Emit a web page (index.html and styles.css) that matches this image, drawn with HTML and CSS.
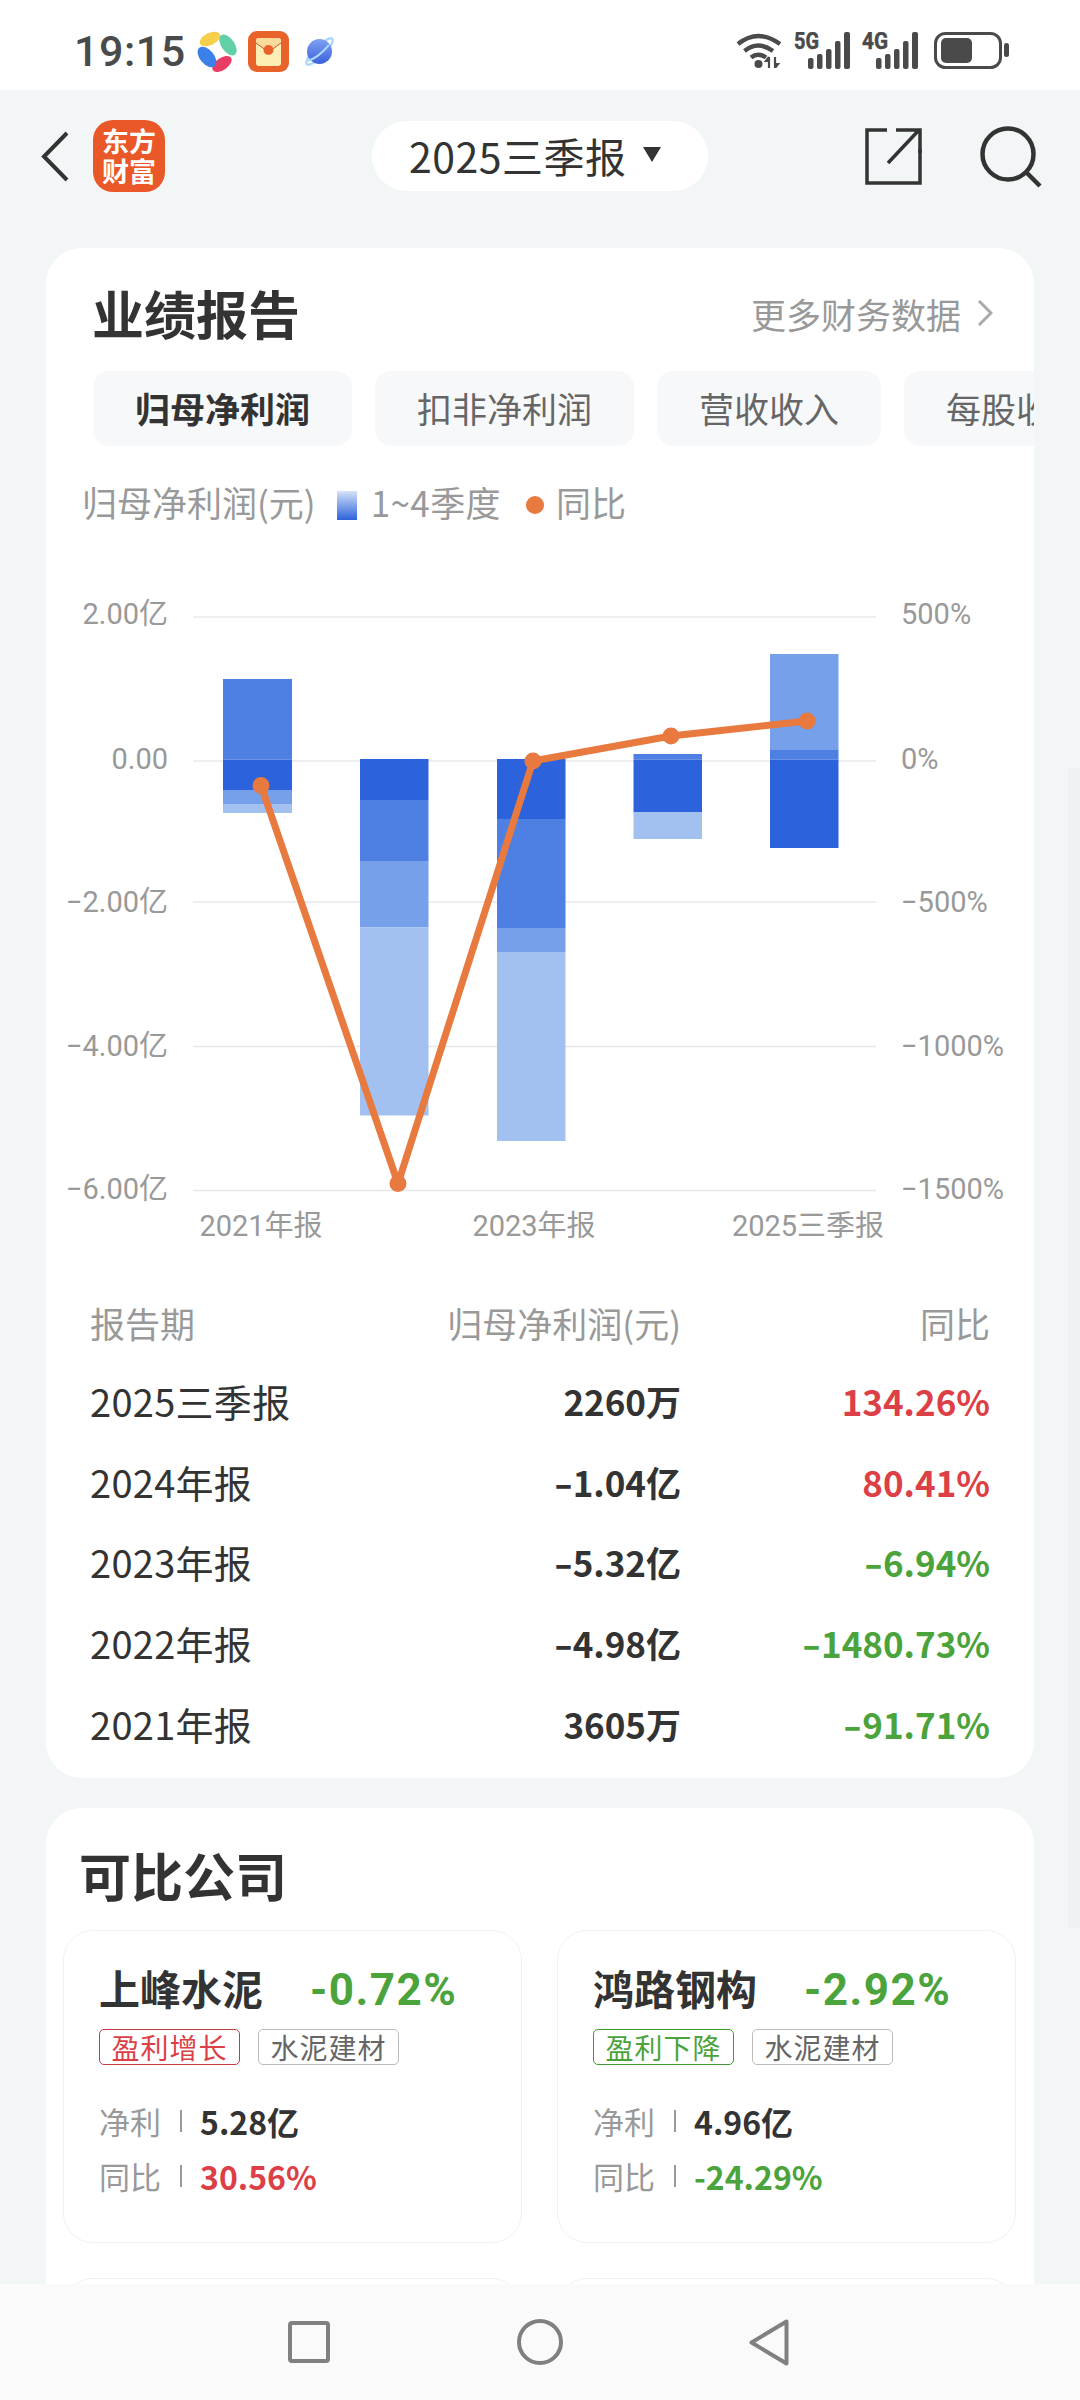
FILE: index.html
```html
<!DOCTYPE html>
<html lang="zh">
<head>
<meta charset="utf-8">
<title>业绩报告</title>
<link rel="stylesheet" href="styles.css">
</head>
<body>
<div class="page">
  <div class="status">
    <span class="time">19:15</span>
    <svg class="ic-app" viewBox="0 0 41 41"><ellipse cx="13" cy="8" rx="11" ry="6" transform="rotate(-25 13 8)" fill="#f7cf4a"/><ellipse cx="31" cy="14" rx="12" ry="6.5" transform="rotate(55 31 14)" fill="#62d0a6"/><ellipse cx="25" cy="33" rx="11" ry="6" transform="rotate(-35 25 33)" fill="#ea3d64"/><ellipse cx="10" cy="26" rx="12" ry="7" transform="rotate(50 10 26)" fill="#3c7fe8"/></svg>
    <svg class="ic-env" viewBox="0 0 41 41"><rect width="41" height="41" rx="9" fill="#e8622a"/><rect x="8" y="7" width="25" height="28" rx="3" fill="#fdeeb5"/><path d="M8 12 L20.5 21 L33 12 L33 10 Q33 7 30 7 L11 7 Q8 7 8 10Z" fill="#f9dc9c"/><path d="M8 12 L20.5 21 L33 12" fill="none" stroke="#c8552a" stroke-width="1"/><circle cx="20.5" cy="19" r="5" fill="#e8622a"/></svg>
    <svg class="ic-planet" viewBox="0 0 29 29"><defs><linearGradient id="pl" x1="0" y1="0" x2="0" y2="1"><stop offset="0" stop-color="#7fa0f3"/><stop offset="1" stop-color="#3a62dc"/></linearGradient></defs><ellipse cx="14.5" cy="14.5" rx="18" ry="5" transform="rotate(-45 14.5 14.5)" fill="none" stroke="#a9d8fb" stroke-width="2.4"/><circle cx="14.5" cy="14.5" r="12.5" fill="url(#pl)"/><path d="M2 24 Q12 22 24 8" fill="none" stroke="#a9d8fb" stroke-width="2"/></svg>
    <span class="status-fill"></span>
    <svg class="ic-wifi" viewBox="0 0 46 35"><g fill="none" stroke="#4a4a4a" stroke-width="4.4"><path d="M2 11 Q22 -5 44 11"/><path d="M8.5 18 Q22 7 37 18"/><path d="M15 24.5 Q22 19 30 24.5"/></g><circle cx="22.5" cy="31" r="4" fill="#4a4a4a"/><path d="M33 35V24M33 24l-3 4h3M39 24v11M39 35l3-4h-3" fill="none" stroke="#4a4a4a" stroke-width="2.2"/></svg>
    <svg class="ic-sig" viewBox="0 0 56 37"><text x="0" y="17" class="net" textLength="25" lengthAdjust="spacingAndGlyphs">5G</text><g fill="#4a4a4a"><rect x="14" y="26" width="5.5" height="11" rx="2"/><rect x="23" y="22" width="5.5" height="15" rx="2"/><rect x="32" y="17" width="5.5" height="20" rx="2"/><rect x="41" y="9" width="5.5" height="28" rx="2"/><rect x="50" y="0" width="6" height="37" rx="2"/></g></svg>
    <svg class="ic-sig" viewBox="0 0 56 37"><text x="0" y="17" class="net" textLength="26" lengthAdjust="spacingAndGlyphs">4G</text><g fill="#4a4a4a"><rect x="14" y="26" width="5.5" height="11" rx="2"/><rect x="23" y="22" width="5.5" height="15" rx="2"/><rect x="32" y="17" width="5.5" height="20" rx="2"/><rect x="41" y="9" width="5.5" height="28" rx="2"/><rect x="50" y="0" width="6" height="37" rx="2"/></g></svg>
    <svg class="ic-batt" viewBox="0 0 75 37"><rect x="1.5" y="1.5" width="65" height="34" rx="10" fill="none" stroke="#4a4a4a" stroke-width="3"/><rect x="7" y="6" width="31" height="25" rx="5" fill="#4a4a4a"/><rect x="70" y="11" width="5" height="14" rx="2.5" fill="#4a4a4a"/></svg>
  </div>

  <div class="topbar">
    <svg class="ic-back" viewBox="0 0 28 51"><path d="M26 2 L3 25.5 L26 49" fill="none" stroke="#333" stroke-width="4"/></svg>
    <div class="logo"><span>东方</span><span>财富</span></div>
    <div class="pill"><span>2025三季报</span><i class="caret"></i></div>
    <svg class="ic-share" viewBox="0 0 57 58"><path d="M22 3 H2 V56 H55 V22" fill="none" stroke="#333" stroke-width="3.5"/><path d="M23 36 L54 3 M31 3 H55 V26" fill="none" stroke="#333" stroke-width="3.5"/></svg>
    <svg class="ic-search" viewBox="0 0 62 62"><circle cx="28" cy="28" r="25.5" fill="none" stroke="#333" stroke-width="4.5"/><path d="M46 46 L60 60" stroke="#333" stroke-width="4.5"/></svg>
  </div>

  <section class="card perf">
    <div class="card-head">
      <h2 class="title">业绩报告</h2>
      <div class="more"><span>更多财务数据</span><svg class="ic-more" viewBox="0 0 16 26"><path d="M2 1 L14 13 L2 25" fill="none" stroke="#aaa" stroke-width="3"/></svg></div>
    </div>
    <div class="tabs">
      <div class="tab active">归母净利润</div>
      <div class="tab">扣非净利润</div>
      <div class="tab">营收收入</div>
      <div class="tab">每股收益</div>
    </div>
    <div class="legend">
      <span class="leg-name">归母净利润(元)</span>
      <i class="leg-bar"></i>
      <span class="leg-q">1~4季度</span>
      <i class="leg-dot"></i>
      <span>同比</span>
    </div>

    <svg class="chart" viewBox="46 526 988 734" width="988" height="734">
      <g class="grid">
        <line x1="193" x2="876" y1="617" y2="617"/>
        <line x1="193" x2="876" y1="761" y2="761"/>
        <line x1="193" x2="876" y1="902" y2="902"/>
        <line x1="193" x2="876" y1="1046.5" y2="1046.5"/>
        <line x1="193" x2="876" y1="1190.5" y2="1190.5"/>
      </g>
      <g class="bars">
        <rect class="b2" x="223" y="679" width="69" height="80.5"/>
        <rect class="b1" x="223" y="759.5" width="69" height="30.5"/>
        <rect class="b3" x="223" y="790" width="69" height="14"/>
        <rect class="b4" x="223" y="804" width="69" height="9"/>

        <rect class="b1" x="360" y="759" width="68.5" height="41"/>
        <rect class="b2" x="360" y="800" width="68.5" height="61"/>
        <rect class="b3" x="360" y="861" width="68.5" height="66.5"/>
        <rect class="b4" x="360" y="927.5" width="68.5" height="188"/>

        <rect class="b1" x="497" y="759" width="68.5" height="60"/>
        <rect class="b2" x="497" y="819" width="68.5" height="109"/>
        <rect class="b3" x="497" y="928" width="68.5" height="24"/>
        <rect class="b4" x="497" y="952" width="68.5" height="189"/>

        <rect class="b2" x="633.5" y="754" width="68.5" height="5.5"/>
        <rect class="b1" x="633.5" y="759.5" width="68.5" height="52.5"/>
        <rect class="b4" x="633.5" y="812" width="68.5" height="27"/>

        <rect class="b3" x="770" y="654" width="68.5" height="96"/>
        <rect class="b2" x="770" y="750" width="68.5" height="9.5"/>
        <rect class="b1" x="770" y="759.5" width="68.5" height="88.5"/>
      </g>
      <polyline class="line" points="261,785.5 398,1183.5 533,761 671,736 807,721"/>
      <g class="pts">
        <circle cx="261" cy="785.5" r="8.5"/>
        <circle cx="398" cy="1183.5" r="8.5"/>
        <circle cx="533" cy="761" r="8.5"/>
        <circle cx="671" cy="736" r="8.5"/>
        <circle cx="807" cy="721" r="8.5"/>
      </g>
      <g class="axis end">
        <text x="168" y="624">2.00亿</text>
        <text x="168" y="769">0.00</text>
        <text x="168" y="912">−2.00亿</text>
        <text x="168" y="1056">−4.00亿</text>
        <text x="168" y="1199">−6.00亿</text>
      </g>
      <g class="axis">
        <text x="901" y="624">500%</text>
        <text x="901" y="769">0%</text>
        <text x="901" y="912">−500%</text>
        <text x="901" y="1056">−1000%</text>
        <text x="901" y="1199">−1500%</text>
      </g>
      <g class="axis mid">
        <text x="261" y="1236">2021年报</text>
        <text x="534" y="1236">2023年报</text>
        <text x="808" y="1236">2025三季报</text>
      </g>
    </svg>

    <div class="table">
      <div class="row head"><span>报告期</span><span class="r">归母净利润(元)</span><span class="r">同比</span></div>
      <div class="row"><span>2025三季报</span><span class="r val">2260万</span><span class="r pct up">134.26%</span></div>
      <div class="row"><span>2024年报</span><span class="r val"><span class="neg">-</span>1.04亿</span><span class="r pct up">80.41%</span></div>
      <div class="row"><span>2023年报</span><span class="r val"><span class="neg">-</span>5.32亿</span><span class="r pct down"><span class="neg">-</span>6.94%</span></div>
      <div class="row"><span>2022年报</span><span class="r val"><span class="neg">-</span>4.98亿</span><span class="r pct down"><span class="neg">-</span>1480.73%</span></div>
      <div class="row"><span>2021年报</span><span class="r val">3605万</span><span class="r pct down"><span class="neg">-</span>91.71%</span></div>
    </div>
  </section>

  <section class="card peers">
    <h2 class="title peers-title">可比公司</h2>
    <div class="peer-grid">
      <article class="peer">
        <div class="peer-top"><span class="peer-name">上峰水泥</span><span class="peer-chg down">-0.72%</span></div>
        <div class="tags"><span class="tag tag-up">盈利增长</span><span class="tag">水泥建材</span></div>
        <div class="metric m-first"><span class="m-label">净利</span><i class="m-sep"></i><span class="m-val">5.28亿</span></div>
        <div class="metric"><span class="m-label">同比</span><i class="m-sep"></i><span class="m-val up">30.56%</span></div>
      </article>
      <article class="peer">
        <div class="peer-top"><span class="peer-name">鸿路钢构</span><span class="peer-chg down">-2.92%</span></div>
        <div class="tags"><span class="tag tag-down">盈利下降</span><span class="tag">水泥建材</span></div>
        <div class="metric m-first"><span class="m-label">净利</span><i class="m-sep"></i><span class="m-val">4.96亿</span></div>
        <div class="metric"><span class="m-label">同比</span><i class="m-sep"></i><span class="m-val down">-24.29%</span></div>
      </article>
      <article class="peer"></article>
      <article class="peer"></article>
    </div>
  </section>

  <i class="scrollbar"></i>

  <nav class="navbar">
    <svg class="ic-nav-sq" viewBox="0 0 42 42"><rect x="2" y="2" width="38" height="38" rx="2" fill="none" stroke="#808080" stroke-width="4"/></svg>
    <svg class="ic-nav-ci" viewBox="0 0 46 46"><circle cx="23" cy="23" r="21" fill="none" stroke="#808080" stroke-width="4"/></svg>
    <svg class="ic-nav-tr" viewBox="0 0 40 47"><path d="M37.5 2.5 V44.5 L2.5 23.5 Z" fill="none" stroke="#808080" stroke-width="4" stroke-linejoin="round"/></svg>
  </nav>
</div>
</body>
</html>
```

FILE: styles.css
```css
* { box-sizing: border-box; }
html, body { margin: 0; padding: 0; }
body {
  font-family: "Noto Sans CJK SC", "Noto Sans", sans-serif;
  color: #333;
  background: #f3f6f7;
}
.page {
  position: relative;
  width: 1080px;
  height: 2400px;
  overflow: hidden;
  background: #f3f6f7;
}

/* status bar */
.status {
  height: 90px;
  background: #fff;
  display: flex;
  align-items: center;
  padding: 13px 71px 0 74px;
}
.time {
  width: 109px;
  font: 500 43px/1 Roboto, sans-serif;
  color: #4a4a4a;
  letter-spacing: 0.5px;
}
.ic-app { width: 41px; height: 41px; margin-left: 14px; }
.ic-env { width: 41px; height: 41px; margin-left: 10px; }
.ic-planet { width: 29px; height: 29px; margin-left: 16px; overflow: visible; }
.status-fill { flex: 1; }
.ic-wifi { width: 46px; height: 35px; margin-top: -2px; }
.ic-sig { width: 56px; height: 37px; margin: -2px 0 0 12px; }
.ic-batt { width: 75px; height: 37px; margin: -2px 0 0 16px; }
.net { font: 700 24px Roboto, sans-serif; fill: #4a4a4a; stroke: #4a4a4a; stroke-width: 0.5; }

/* top bar */
.topbar {
  height: 158px;
  padding: 30px 0 0 41px;
  display: flex;
  align-items: flex-start;
}
.ic-back { width: 28px; height: 51px; margin: 11px 24px 0 0; flex: none; }
.logo {
  width: 72px;
  height: 72px;
  border-radius: 20px;
  background: #ea5728;
  color: #fff;
  display: flex;
  flex-direction: column;
  align-items: center;
  justify-content: center;
  font-size: 27px;
  font-weight: 700;
  line-height: 30px;
  flex: none;
}
.pill {
  margin-left: 207px;
  width: 336px;
  height: 70px;
  margin-top: 1px;
  border-radius: 35px;
  background: #fff;
  display: flex;
  align-items: center;
  padding: 0 0 3px 37px;
  font-size: 41px;
  letter-spacing: 0.5px;
  color: #333;
  flex: none;
}
.caret {
  margin-left: 16px;
  width: 0;
  height: 0;
  border-left: 9px solid transparent;
  border-right: 9px solid transparent;
  border-top: 15px solid #333;
}
.ic-share { width: 57px; height: 58px; margin: 7px 0 0 157px; flex: none; }
.ic-search { width: 62px; height: 62px; margin: 6px 0 0 58px; flex: none; }

/* cards */
.card {
  margin: 0 46px;
  width: 988px;
  background: #fff;
  border-radius: 36px;
  overflow: hidden;
}
.perf { height: 1530px; }
.peers { margin-top: 30px; height: 800px; }
.title {
  margin: 0;
  font-size: 52px;
  line-height: 60px;
  font-weight: 700;
  color: #333;
}
.card-head {
  display: flex;
  justify-content: space-between;
  align-items: center;
  padding: 35px 41px 0 46px;
}
.more {
  display: flex;
  align-items: center;
  font-size: 35px;
  color: #999;
}
.ic-more { width: 16px; height: 26px; margin-left: 16px; }

.tabs {
  display: flex;
  gap: 23px;
  margin-top: 28px;
  padding-left: 47px;
  white-space: nowrap;
}
.tab {
  flex: none;
  height: 75px;
  line-height: 73px;
  padding: 0 42px;
  border-radius: 16px;
  background: #f7f8fa;
  font-size: 35px;
  color: #666;
}
.tab.active { font-weight: 700; color: #333; }

.legend {
  display: flex;
  align-items: center;
  height: 42px;
  margin-top: 38px;
  padding-left: 36px;
  font-size: 35px;
  line-height: 36px;
  color: #999;
}
.legend span { position: relative; top: -3px; }
.leg-bar {
  width: 20px;
  height: 29px;
  margin: 0 14px 0 21px;
  background: linear-gradient(#d5e2f8, #2c63dc);
}
.leg-q { letter-spacing: 0.4px; }
.leg-dot {
  width: 18px;
  height: 18px;
  border-radius: 50%;
  background: #e8793f;
  margin: 0 12px 0 25px;
}

/* chart */
.chart { display: block; }
.grid line { stroke: #e6e8ec; stroke-width: 1.5; }
.b1 { fill: #2c63dc; }
.b2 { fill: #4d80e2; }
.b3 { fill: #76a0ea; }
.b4 { fill: #a3c1f0; }
.line { fill: none; stroke: #e8793f; stroke-width: 7; stroke-linejoin: round; }
.pts circle { fill: #e8793f; }
.axis text {
  font-family: Roboto, "Noto Sans CJK SC", sans-serif;
  font-size: 29px;
  fill: #999;
}
.axis.end text { text-anchor: end; }
.axis.mid text { text-anchor: middle; }

/* table */
.table { margin-top: 23px; }
.row {
  display: grid;
  grid-template-columns: 312px 279px 309px;
  height: 80.7px;
  line-height: 75px;
  padding-left: 44px;
  font-size: 38px;
  letter-spacing: 0.3px;
  color: #333;
}
.row.head { height: 80px; line-height: 80px; font-size: 35px; color: #999; letter-spacing: 0; }
.r { text-align: right; }
.val { font-weight: 700; font-size: 35px; letter-spacing: 0; }
.pct { font-weight: 700; font-size: 35px; letter-spacing: 0; }
.neg { display: inline-block; transform: scaleX(1.5); margin: 0 3px; }
.up { color: #dd3f47; }
.down { color: #4ba33c; }

/* peers */
.peers-title { padding: 37px 0 0 33px; }
.peer-grid {
  display: grid;
  grid-template-columns: 459px 459px;
  column-gap: 35px;
  row-gap: 35px;
  padding: 25px 17px 0;
}
.peer {
  height: 313px;
  border: 1px solid #f0f1f3;
  border-radius: 30px;
  padding: 26px 0 0 35px;
}
.peer-top { display: flex; align-items: center; height: 60px; }
.peer-name { font-size: 41px; font-weight: 700; color: #333; line-height: 62px; }
.peer-chg { margin: 5px 0 0 47px; font: 700 44px/60px Roboto, sans-serif; letter-spacing: 1.5px; }
.tags { display: flex; gap: 18px; margin-top: 12px; }
.tag {
  width: 141px;
  height: 36px;
  line-height: 34px;
  text-align: center;
  font-size: 28px;
  letter-spacing: 1px;
  color: #666;
  border: 1px solid #bbb;
  border-radius: 5px;
}
.tag-up { color: #dd3f47; border-color: #c83c44; }
.tag-down { color: #4ba33c; border-color: #3f9a30; }
.metric { display: flex; align-items: center; height: 55px; font-size: 32px; }
.m-first { margin-top: 28px; }
.m-label { color: #999; width: 81px; font-size: 31px; }
.m-sep { width: 2px; height: 22px; background: #999; margin-right: 18px; }
.m-val { font-weight: 700; color: #333; }
.m-val.up { color: #dd3f47; }
.m-val.down { color: #4ba33c; }

/* page scrollbar */
.scrollbar {
  position: absolute;
  right: 0;
  top: 768px;
  width: 12px;
  height: 1160px;
  background: #eff2f3;
}

/* android nav */
.navbar {
  position: absolute;
  left: 0;
  right: 0;
  bottom: 0;
  height: 116px;
  background: #fafafa;
  display: flex;
  align-items: center;
  padding-left: 288px;
}
.ic-nav-sq { width: 42px; height: 42px; }
.ic-nav-ci { width: 46px; height: 46px; margin-left: 187px; }
.ic-nav-tr { width: 40px; height: 47px; margin-left: 186px; }
```
